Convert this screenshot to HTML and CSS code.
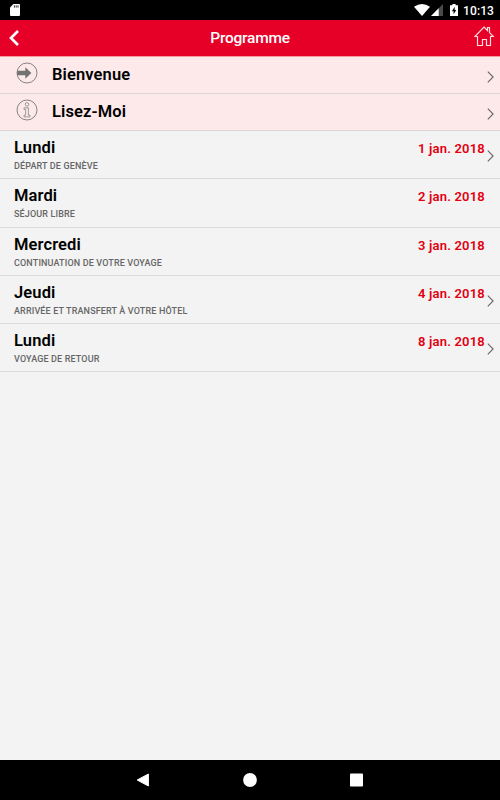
FILE: index.html
```
<!DOCTYPE html>
<html lang="fr">

<head>
    <meta charset="utf-8">
    <title>Programme</title>
    <link rel="stylesheet" href="styles.css">
</head>

<body>
    <div class="status-bar">
        <svg class="sd-card" width="10" height="12" viewBox="0 0 10 12">
            <path d="M3.4 0H9Q10 0 10 1V11Q10 12 9 12H1Q0 12 0 11V3.5Z" fill="#fff" />
            <path d="M4.4 1.3V3.6M6.2 1.3V3.6M8 1.3V3.6" stroke="#333" stroke-width="1" />
        </svg>
        <div class="status-icons">
            <svg class="wifi" width="16" height="12" viewBox="0 0 16 12">
                <path d="M0 2.8Q8-2.8 16 2.8L8 12Z" fill="#fff" />
            </svg>
            <svg class="signal" width="12" height="12" viewBox="0 0 12 12">
                <path d="M12 0V12H0Z" fill="#4a4a4a" />
                <path d="M7.7 4.3V12H0Z" fill="#fff" />
            </svg>
            <svg class="battery" width="8" height="12" viewBox="0 0 8 12">
                <path d="M2.4 0H5.6V1.2H8V12H0V1.2H2.4Z" fill="#fff" />
                <path d="M4.7 2.8L1.9 7.2H3.6V10.3L6.3 5.9H4.7Z" fill="#000" />
            </svg>
            <span class="clock">10:13</span>
        </div>
    </div>

    <header class="header">
        <svg class="back" width="11" height="16" viewBox="0 0 11 16">
            <path d="M9 1L2 8L9 15" fill="none" stroke="#fff" stroke-width="2.7" />
        </svg>
        <h1>Programme</h1>
        <svg class="home" width="20" height="20" viewBox="0 0 20 20">
            <path d="M3.5 10.5H.8L10 1.1L13.5 4.5V1.5H15.5V6.6L19.4 10.5H16.5V19.5H12.5V13.5H8.5V19.5H3.5Z" fill="none" stroke="#ffdce0" stroke-width="1.2" />
        </svg>
    </header>

    <main class="programme">
        <a class="info-row">
            <svg class="info-icon" width="22" height="22" viewBox="0 0 22 22">
                <circle cx="11" cy="11" r="10" fill="none" stroke="#777" stroke-width=".9" />
                <path d="M1.2 8.7H9.3V5.3L15.4 11L9.3 16.7V13.3H1.2Z" fill="#737373" />
            </svg>
            <h2>Bienvenue</h2>
            <svg class="chevron" width="7" height="12" viewBox="0 0 7 12">
                <path d="M.8.7L6.1 6L.8 11.3" />
            </svg>
        </a>
        <a class="info-row">
            <svg class="info-icon" width="22" height="22" viewBox="0 0 22 22">
                <circle cx="11" cy="11" r="10" fill="none" stroke="#777" stroke-width=".9" />
                <g fill="none" stroke="#858585" stroke-width=".8">
                    <circle cx="11" cy="5.4" r="1.8" />
                    <path d="M8 8.8H12.4V16.2H14V17.9H8V16.2H9.6V10.5H8Z" />
                </g>
            </svg>
            <h2>Lisez-Moi</h2>
            <svg class="chevron" width="7" height="12" viewBox="0 0 7 12">
                <path d="M.8.7L6.1 6L.8 11.3" />
            </svg>
        </a>

        <a class="day-row">
            <div class="day">
                <h2>Lundi</h2>
                <p>DÉPART DE GENÈVE</p>
            </div>
            <span class="date">1 jan. 2018</span>
            <svg class="chevron" width="7" height="12" viewBox="0 0 7 12">
                <path d="M.8.7L6.1 6L.8 11.3" />
            </svg>
        </a>
        <div class="day-row">
            <div class="day">
                <h2>Mardi</h2>
                <p>SÉJOUR LIBRE</p>
            </div>
            <span class="date">2 jan. 2018</span>
        </div>
        <div class="day-row">
            <div class="day">
                <h2>Mercredi</h2>
                <p>CONTINUATION DE VOTRE VOYAGE</p>
            </div>
            <span class="date">3 jan. 2018</span>
        </div>
        <a class="day-row">
            <div class="day">
                <h2>Jeudi</h2>
                <p>ARRIVÉE ET TRANSFERT À VOTRE HÔTEL</p>
            </div>
            <span class="date">4 jan. 2018</span>
            <svg class="chevron" width="7" height="12" viewBox="0 0 7 12">
                <path d="M.8.7L6.1 6L.8 11.3" />
            </svg>
        </a>
        <a class="day-row">
            <div class="day">
                <h2>Lundi</h2>
                <p>VOYAGE DE RETOUR</p>
            </div>
            <span class="date">8 jan. 2018</span>
            <svg class="chevron" width="7" height="12" viewBox="0 0 7 12">
                <path d="M.8.7L6.1 6L.8 11.3" />
            </svg>
        </a>
    </main>

    <nav class="nav-bar">
        <svg width="14" height="14" viewBox="0 0 14 14">
            <path d="M12.4 1V13L1.2 7Z" fill="#fff" stroke="#fff" stroke-linejoin="round" />
        </svg>
        <svg width="14" height="14" viewBox="0 0 14 14">
            <circle cx="7" cy="7" r="6.9" fill="#fff" />
        </svg>
        <svg width="14" height="14" viewBox="0 0 14 14">
            <rect x="0" y=".5" width="13" height="13" rx=".8" fill="#fff" />
        </svg>
    </nav>
</body>

</html>
```
FILE: styles.css
```
* {
    padding: 0;
    margin: 0;
    box-sizing: border-box;
}

body {
    display: flex;
    flex-direction: column;
    height: 100vh;
    overflow: hidden;
    font-family: Roboto, sans-serif;
    background-color: #f3f3f3;
    color: #000;
}

svg {
    display: block;
    flex: none;
}

.status-bar {
    display: flex;
    flex: none;
    justify-content: space-between;
    height: 20px;
    padding: 4px 6px 0 10px;
    background-color: #000;
}

.status-icons {
    display: flex;
}

.wifi {
    margin-right: 1px;
}

.battery {
    margin-left: 7px;
}

.clock {
    margin-left: 5px;
    font-size: 12px;
    font-weight: 500;
    letter-spacing: .1px;
    line-height: 14px;
    color: #fff;
}

.header {
    display: grid;
    grid-template-columns: 40px 1fr 40px;
    align-items: center;
    flex: none;
    height: 36px;
    padding: 0 6px 0 8px;
    background-color: #e60028;
}

.back {
    margin-left: 1px;
}

.home {
    justify-self: end;
    margin-top: -4px;
}

h1 {
    margin-left: -2px;
    font-size: 15.5px;
    font-weight: 500;
    letter-spacing: -.25px;
    line-height: 20px;
    text-align: center;
    color: #fff;
}

h2 {
    font-size: 16.5px;
    font-weight: 600;
    letter-spacing: .12px;
    line-height: 20px;
}

.programme {
    flex: 1;
    border-top: 1px solid #f29a9f;
}

.info-row {
    display: flex;
    align-items: flex-start;
    height: 37px;
    padding: 5px 6px 0 16px;
    border-bottom: 1px solid #dcd6d6;
    background-color: #fde9e9;
}

.info-row h2 {
    margin: 3px auto 0 14px;
}

.chevron {
    fill: none;
    stroke: #666;
    stroke-width: 1.1;
}

.info-row .chevron {
    margin-top: 9px;
}

.day-row {
    display: flex;
    height: 48.3px;
    padding: 7px 6px 0 14px;
    border-bottom: 1px solid #dadada;
}

.day {
    flex: 1;
}

.day p {
    margin-top: 2px;
    font-size: 9px;
    font-weight: 500;
    letter-spacing: .14px;
    line-height: 12px;
    color: #666;
}

.date {
    width: 75px;
    margin-right: 9px;
    font-size: 13px;
    font-weight: 600;
    letter-spacing: .2px;
    line-height: 22px;
    text-align: right;
    white-space: nowrap;
    color: #e2000f;
}

.day-row .chevron {
    margin: 12px 0 0 -7px;
}

.nav-bar {
    display: flex;
    flex: none;
    align-items: center;
    justify-content: center;
    gap: 93px;
    height: 40px;
    background-color: #000;
}
```
